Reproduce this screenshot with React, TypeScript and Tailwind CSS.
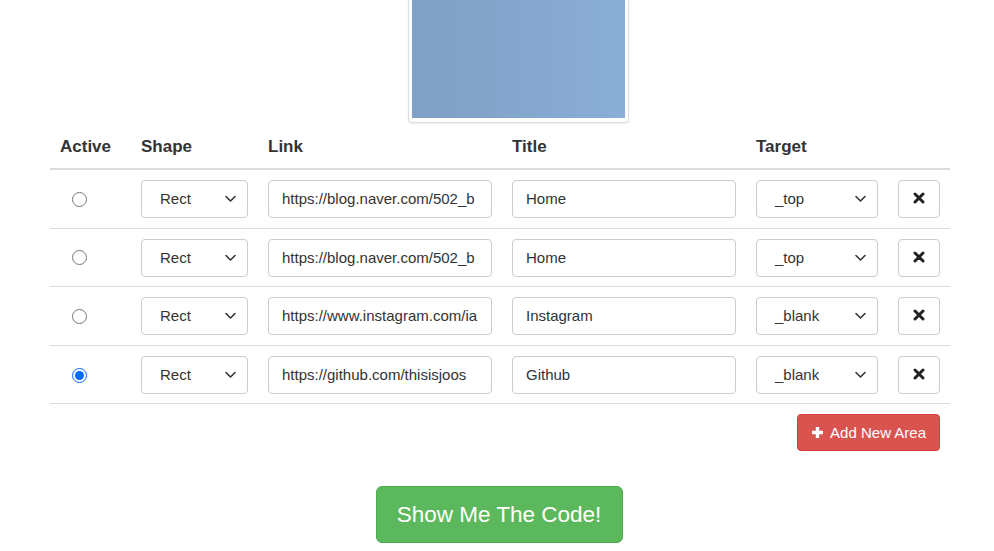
import React from 'react';

const rows = [
  { link: 'https://blog.naver.com/502_b', title: 'Home', target: '_top', active: false },
  { link: 'https://blog.naver.com/502_b', title: 'Home', target: '_top', active: false },
  { link: 'https://www.instagram.com/ia', title: 'Instagram', target: '_blank', active: false },
  { link: 'https://github.com/thisisjoos', title: 'Github', target: '_blank', active: true },
];

const Chevron = () => (
  <svg width="11" height="7" viewBox="0 0 11 7" className="absolute right-[11px] top-1/2 -translate-y-1/2">
    <path d="M1 1l4.5 4.5L10 1" fill="none" stroke="#333" strokeWidth="1.6" strokeLinecap="round" strokeLinejoin="round" />
  </svg>
);

function FakeSelect({ value, width }: { value: string; width: string }) {
  return (
    <div className={`relative ${width} h-[38px] rounded-[4px] border border-[#ccc] bg-white flex items-center pl-[18px] text-[15px] text-[#333]`}>
      {value}
      <Chevron />
    </div>
  );
}

export default function App() {
  return (
    <div className="min-h-[551px] bg-white text-[#333]" style={{ fontFamily: '"Liberation Sans", Arial, sans-serif' }}>
      {/* image preview */}
      <div className="ml-[408px] w-[221px] h-[123px] border-x border-b border-[#ddd] rounded-b-[4px] px-[3px] pb-[4px] shadow-[0_1px_2px_rgba(0,0,0,0.08)]">
        <div className="w-full h-full bg-gradient-to-r from-[#80a0c4] via-[#85a6cd] to-[#8aaed7]" />
      </div>

      <div className="ml-[50px] w-[900px]">
        {/* header */}
        <div className="grid grid-cols-[80px_127px_244px_244px_142px_63px] h-[47px] pt-[2px] items-center border-b-2 border-[#ddd] text-[17px] font-bold">
          <div className="pl-[10px]">Active</div>
          <div className="pl-[11px]">Shape</div>
          <div className="pl-[11px]">Link</div>
          <div className="pl-[11px]">Title</div>
          <div className="pl-[11px]">Target</div>
          <div />
        </div>

        {rows.map((r, i) => (
          <div
            key={i}
            className="grid grid-cols-[80px_127px_244px_244px_142px_63px] items-center border-b border-[#ddd] pt-[10.3px] pb-[9.3px]"
          >
            <div className="pl-[22px] flex items-center">
              <input
                type="radio"
                checked={r.active}
                onChange={() => {}}
                className="w-[15px] h-[15px] m-0 accent-[#0a6cff]"
              />
            </div>
            <div className="pl-[11px]">
              <FakeSelect value="Rect" width="w-[107px]" />
            </div>
            <div className="pl-[11px]">
              <div className="w-[224px] h-[38px] rounded-[4px] border border-[#ccc] flex items-center pl-[13px] pr-[4px] text-[15px] overflow-hidden whitespace-nowrap">
                {r.link}
              </div>
            </div>
            <div className="pl-[11px]">
              <div className="w-[224px] h-[38px] rounded-[4px] border border-[#ccc] flex items-center pl-[13px] text-[15px]">
                {r.title}
              </div>
            </div>
            <div className="pl-[11px]">
              <FakeSelect value={r.target} width="w-[122px]" />
            </div>
            <div className="pl-[11px]">
              <button className="w-[42px] h-[38px] rounded-[4px] border border-[#ccc] bg-white flex items-center justify-center pb-[2px]">
                <svg width="12" height="12" viewBox="0 0 12 12">
                  <path d="M2 2l8 8M10 2l-8 8" stroke="#222" strokeWidth="3" strokeLinecap="round" />
                </svg>
              </button>
            </div>
          </div>
        ))}

        <div className="flex justify-end pr-[10px] mt-[10px]">
          <button className="h-[37px] pl-[13px] pr-[13px] rounded-[4px] bg-[#d9534f] border border-[#d43f3a] text-white text-[15px] flex items-center gap-[6px]">
            <svg width="13" height="13" viewBox="0 0 13 13">
              <path d="M6.5 1v11M1 6.5h11" stroke="#fff" strokeWidth="3.4" />
            </svg>
            Add New Area
          </button>
        </div>
      </div>

      <div className="flex justify-center mt-[35px] pl-[4px]">
        <button className="h-[57px] w-[247px] rounded-[6px] bg-[#5cb85c] border border-[#4cae4c] text-white text-[22.5px]">
          Show Me The Code!
        </button>
      </div>
    </div>
  );
}
